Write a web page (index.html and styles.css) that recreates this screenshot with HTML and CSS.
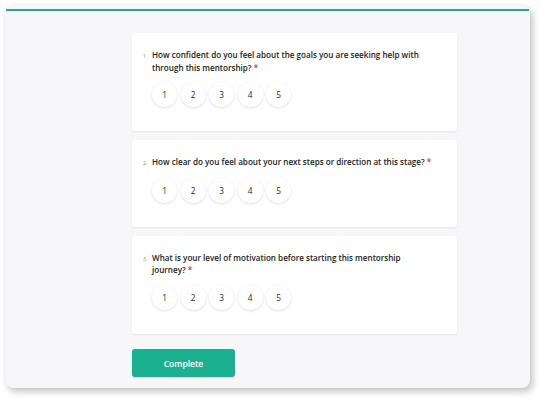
FILE: index.html
```html
<!DOCTYPE html>
<html>
<head>
<meta charset="utf-8">
<link rel="stylesheet" href="styles.css">
</head>
<body>
<div class="frame">
  <div class="topline"></div>
  <div class="content">
    <div class="card">
      <div class="question"><span class="num">1.</span><span class="qtext">How confident do you feel about the goals you are seeking help with through this mentorship? <span class="req">*</span></span></div>
      <div class="scale"><span class="opt">1</span><span class="opt">2</span><span class="opt">3</span><span class="opt">4</span><span class="opt">5</span></div>
    </div>
    <div class="card">
      <div class="question"><span class="num">2.</span><span class="qtext">How clear do you feel about your next steps or direction at this stage? <span class="req">*</span></span></div>
      <div class="scale"><span class="opt">1</span><span class="opt">2</span><span class="opt">3</span><span class="opt">4</span><span class="opt">5</span></div>
    </div>
    <div class="card">
      <div class="question"><span class="num">3.</span><span class="qtext">What is your level of motivation before starting this mentorship journey? <span class="req">*</span></span></div>
      <div class="scale"><span class="opt">1</span><span class="opt">2</span><span class="opt">3</span><span class="opt">4</span><span class="opt">5</span></div>
    </div>
    <button class="complete">Complete</button>
  </div>
</div>
</body>
</html>
```
FILE: styles.css
```css
* { box-sizing: border-box; }
html, body { margin: 0; padding: 0; background: #ffffff; }
body {
  width: 546px;
  height: 406px;
  padding: 5px 16px 0 5px;
  font-family: "Open Sans", "Liberation Sans", sans-serif;
}
.frame {
  width: 525px;
  height: 383px;
  background: #f7f7f9;
  border-radius: 8px;
  box-shadow: 3px 4px 7px rgba(0, 0, 0, 0.22), 0 0 2px rgba(0, 0, 0, 0.08);
  padding-top: 4px;
  overflow: hidden;
}
.topline {
  height: 2px;
  margin: 0 1px;
  background: #2aa886;
}
.content {
  padding: 22px 0 0 127px;
  display: flex;
  flex-direction: column;
  gap: 8.5px;
}
.card {
  width: 325px;
  background: #ffffff;
  border-radius: 3px;
  box-shadow: 0 1px 2px rgba(0, 0, 0, 0.08);
  padding: 16px 14px 24px 11px;
}
.question {
  display: flex;
  align-items: baseline;
  min-height: 14.5px;
}
.num {
  width: 9px;
  flex: none;
  font-size: 5.5px;
  color: #8a8a8a;
}
.qtext {
  max-width: 283px;
  font-size: 8.1px;
  line-height: 12.5px;
  font-weight: 600;
  color: #222;
}
.req { color: #e0284f; }
.scale {
  display: flex;
  gap: 3.5px;
  margin: 8px 0 0 9px;
}
.opt {
  width: 25px;
  height: 25px;
  border-radius: 50%;
  background: #fff;
  box-shadow: 0 1px 3px rgba(0, 0, 0, 0.13);
  display: flex;
  align-items: center;
  justify-content: center;
  font-size: 8.3px;
  color: #2a2a2a;
}
.complete {
  margin-top: 7px;
  width: 103px;
  height: 28px;
  border: none;
  border-radius: 3px;
  background: #1bb08f;
  color: #fff;
  font-family: "Open Sans", "Liberation Sans", sans-serif;
  font-size: 8.5px;
  font-weight: 600;
  box-shadow: 0 1px 1px rgba(0, 0, 0, 0.12);
  padding: 0;
}
```
